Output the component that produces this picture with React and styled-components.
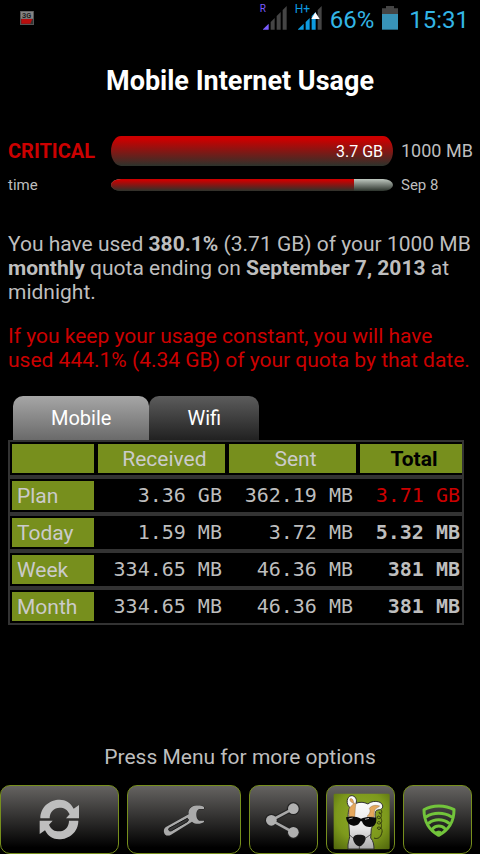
import React from "react";
import styled, { createGlobalStyle } from "styled-components";

const GlobalStyle = createGlobalStyle`
	* {
		box-sizing: border-box;
	}
	body {
		margin: 0;
		background: #000;
		color: #bebebe;
		font-family: Roboto, "Noto Sans", sans-serif;
	}
`;

const Screen = styled.div`
	min-height: 100vh;
	display: flex;
	flex-direction: column;
`;

const StatusBar = styled.header`
	height: 36px;
	padding: 0 11px 0 20px;
	display: flex;
	align-items: center;
	justify-content: space-between;
	color: #33b5e5;
	font-size: 24px;
	line-height: 24px;
`;

const StatusIcons = styled.div`
	display: flex;
	align-items: center;
	gap: 8px;
`;

const Percent = styled.span`
	padding-top: 4px;
`;

const Clock = styled.time`
	padding: 4px 0 0 3px;
`;

const SignalWrap = styled.span`
	position: relative;
	display: flex;
	padding-left: ${(props) => props.$indent}px;
`;

const SignalType = styled.span`
	position: absolute;
	left: 0;
	top: -2px;
	color: ${(props) => props.$color};
	font-size: ${(props) => props.$size}px;
	line-height: 10px;
`;

const Title = styled.h1`
	margin: 0;
	padding: 29px 8px 0;
	color: #fff;
	font-size: 27px;
	font-weight: 700;
	line-height: 32px;
	text-align: center;
`;

const Content = styled.main`
	padding: 39px 0 0 8px;
`;

const Meters = styled.div`
	display: grid;
	grid-template-columns: 95px 1fr 71px;
	column-gap: 8px;
	row-gap: 8px;
	align-items: center;
	padding-right: 8px;
`;

const MeterLabel = styled.span`
	color: ${(props) => (props.$critical ? "#cc0000" : "inherit")};
	font-size: ${(props) => (props.$critical ? 20 : 15)}px;
	font-weight: ${(props) => (props.$critical ? 700 : 400)};
	line-height: 22px;
	white-space: nowrap;
`;

const MeterLimit = styled.span`
	font-size: ${(props) => (props.$small ? 15 : 18)}px;
	line-height: 22px;
	white-space: nowrap;
`;

const Track = styled.div`
	height: ${(props) => (props.$thin ? 12 : 30)}px;
	border-radius: ${(props) => (props.$thin ? "10px / 6px" : "10px / 15px")};
	background: linear-gradient(#bfc8c0, #2c332c);
	overflow: hidden;
`;

const Fill = styled.div`
	height: 100%;
	padding-right: 10px;
	background: linear-gradient(#cc0000, #cc0000 10%, #2c332c);
	color: #fff;
	font-size: 16px;
	line-height: 32px;
	text-align: right;
`;

const Message = styled.p`
	margin: ${(props) => (props.$warning ? 20 : 36)}px 0 0;
	color: ${(props) => (props.$warning ? "#cc0000" : "inherit")};
	font-size: 21px;
	line-height: 24px;
`;

const Tabs = styled.div`
	display: flex;
	margin-top: 24px;
	padding-left: 5px;
`;

const Tab = styled.button`
	height: 44px;
	padding: 0 38px;
	border: 0;
	border-radius: 10px 10px 0 0;
	background: ${(props) =>
		props.$active
			? "linear-gradient(#a6a6a6, #6a6a6a)"
			: "linear-gradient(#5c5c5c, #212121)"};
	color: #fff;
	font-family: inherit;
	font-size: 20px;
	line-height: 44px;
`;

const TableWrap = styled.div`
	padding-right: 16px;
`;

const UsageTable = styled.table`
	width: 100%;
	table-layout: fixed;
	border: 2px solid #333;
	border-collapse: separate;
	border-spacing: 0;
	font-size: 21px;
	line-height: 30px;

	tr:not(:last-child) > *,
	thead th {
		border-bottom: 4px solid #333;
	}
	tbody tr:last-child > * {
		border-bottom: 0;
	}
`;

const Column = styled.col`
	width: ${(props) => props.$width}%;
`;

const HeadCell = styled.th`
	padding: 2px;
	font-weight: ${(props) => (props.$strong ? 700 : 400)};
	color: ${(props) => (props.$strong ? "#000" : "#cbcbcb")};

	&:last-child {
		padding-right: 0;
	}
`;

const Plate = styled.div`
	height: 29px;
	padding: ${(props) => (props.$left ? "0 5px" : "0 2px 0 8px")};
	background: #778f1d;
	text-align: ${(props) => (props.$left ? "left" : "center")};
`;

const DataCell = styled.td`
	padding: 2px ${(props) => (props.$total ? 2 : 5)}px 2px 0;
	color: ${(props) => (props.$over ? "#cc0000" : "inherit")};
	font-family: "DejaVu Sans Mono", monospace;
	font-size: 20px;
	font-weight: ${(props) => (props.$total && !props.$over ? 700 : 400)};
	line-height: 29px;
	text-align: right;
	white-space: nowrap;
`;

const Footer = styled.footer`
	margin-top: auto;
`;

const Hint = styled.p`
	margin: 0;
	padding: 24px 0 16px;
	font-size: 21px;
	line-height: 24px;
	text-align: center;
`;

const Toolbar = styled.div`
	display: flex;
	gap: 8px;
	padding-right: 8px;
`;

const ToolButton = styled.button`
	flex: ${(props) => (props.$grow ? `${props.$grow} 1 0` : "0 0 69px")};
	height: 69px;
	padding: 0;
	display: flex;
	align-items: center;
	justify-content: center;
	border: 1px solid #778f1d;
	border-radius: 10px;
	background: linear-gradient(#656361, #000 92%);
`;

const rows = [
	{ label: "Plan", received: "3.36 GB", sent: "362.19 MB", total: "3.71 GB", over: true },
	{ label: "Today", received: "1.59 MB", sent: "3.72 MB", total: "5.32 MB" },
	{ label: "Week", received: "334.65 MB", sent: "46.36 MB", total: "381 MB" },
	{ label: "Month", received: "334.65 MB", sent: "46.36 MB", total: "381 MB" },
];

const NotificationIcon = () => (
	<svg width="14" height="14" viewBox="0 0 42 42" aria-label="3G usage">
		<rect width="42" height="42" fill="#555" />
		<rect x="3" y="2" width="36" height="21" fill="#858585" />
		<text x="6" y="20" fontSize="22" fontWeight="700" fill="#222">
			3G
		</text>
		<rect x="3" y="24" width="36" height="15" fill="#333" />
		<path d="M4 24h33l-6 14H4z" fill="#b80d0d" />
	</svg>
);

const Signal = ({ label, color, level, indent, size, uploading }) => (
	<SignalWrap $indent={indent}>
		<SignalType $color={color} $size={size}>
			{label}
		</SignalType>
		<svg width="24" height="24" viewBox="0 0 72 72">
			<path d="M0 71V70L17 53V71z" fill={color} />
			<path d="M23 71V48L35 36V71z" fill={level > 1 ? color : "#454545"} />
			<path d="M41 71V30L53 18V71z" fill={level > 2 ? color : "#454545"} />
			<path d="M59 71V12L71 0V71z" fill="#454545" />
			{uploading && <path d="M52 19L65 39H40z" fill="#fff" />}
		</svg>
	</SignalWrap>
);

const BatteryIcon = () => (
	<svg width="16" height="24" viewBox="0 0 48 72">
		<path d="M12 0h24v7h12v18H0V7h12z" fill="#454545" />
		<rect y="24" width="48" height="47" fill="#3893b8" />
	</svg>
);

const RefreshIcon = () => (
	<svg width="48" height="48" viewBox="106 64 144 144" fill="#bebebe">
		<path d="M122 131C122 97 150 75 180 75C198 75 213 84 222 102L238 91V131H199L210 119C203 104 193 99 180 99C163 99 150 112 150 131Z" />
		<path
			transform="rotate(180 179 134.5)"
			d="M122 131C122 97 150 75 180 75C198 75 213 84 222 102L238 91V131H199L210 119C203 104 193 99 180 99C163 99 150 112 150 131Z"
		/>
	</svg>
);

const WrenchIcon = () => (
	<svg width="48" height="48" viewBox="0 64 144 144">
		<path
			d="M132 97C122 91 104 92 95 97C87 102 84 110 86 119L18 157C9 163 11 175 16 180C20 184 28 183 33 180L96 141C106 150 122 149 132 142V138H117C110 133 109 126 109 119C109 112 111 106 117 103H132Z"
			fill="#aaa"
			stroke="#222"
			strokeWidth="3"
			paintOrder="stroke"
		/>
		<path
			d="M82 131C86 133 86 138 82 141L35 168C29 171 23 166 27 161Z"
			fill="#363636"
			stroke="#161616"
			strokeWidth="3"
		/>
	</svg>
);

const ShareIcon = () => (
	<svg width="48" height="48" viewBox="298 64 144 144">
		<g fill="#222" stroke="#222">
			<path d="M398 102L332 137L398 173" fill="none" strokeWidth="14" />
			<circle cx="332" cy="137" r="19" />
			<circle cx="398" cy="102" r="19" />
			<circle cx="398" cy="173" r="19" />
		</g>
		<g fill="#b0b0b0">
			<path d="M398 102L332 137L398 173" fill="none" stroke="#a8a8a8" strokeWidth="8" />
			<circle cx="332" cy="137" r="16" />
			<circle cx="398" cy="102" r="16" />
			<circle cx="398" cy="173" r="16" />
		</g>
	</svg>
);

const DogIcon = () => (
	<svg width="60" height="60" viewBox="31 46 180 180">
		<defs>
			<radialGradient id="lawn" cx="0.5" cy="0.4" r="0.75">
				<stop offset="0" stopColor="#8fab28" />
				<stop offset="0.6" stopColor="#7d991c" />
				<stop offset="1" stopColor="#53690d" />
			</radialGradient>
			<linearGradient id="fur" x1="0" y1="0" x2="0" y2="1">
				<stop offset="0" stopColor="#fff" />
				<stop offset="0.6" stopColor="#e6e6e6" />
				<stop offset="1" stopColor="#aaa" />
			</linearGradient>
		</defs>
		<rect x="39" y="57" width="168" height="167" rx="4" fill="url(#lawn)" />
		<path
			d="M82 223C80 205 86 196 87 186L84 140C80 120 84 106 87 98C75 88 78 66 91 63C105 62 110 76 106 86C118 81 130 82 142 88C150 80 166 78 178 83C188 89 189 100 180 104C174 107 168 104 165 110C162 118 164 125 164 132C162 147 156 152 152 162L150 190C158 198 160 211 160 223Z"
			fill="url(#fur)"
			stroke="#333"
			strokeWidth="3"
		/>
		<path
			d="M88 98L99 87C91 82 86 79 88 73C93 69 99 76 99 85L106 87C103 99 104 112 102 127H86C84 115 85 105 88 98Z"
			fill="#e5a85d"
			stroke="#715027"
			strokeWidth="1"
		/>
		<path
			d="M146 101C152 92 165 90 177 94C173 99 168 98 163 105C158 115 163 124 159 128L139 125C146 119 151 111 146 101Z"
			fill="#e5a85d"
			stroke="#715027"
			strokeWidth="1"
		/>
		<path
			d="M76 128C90 123 109 125 121 132C134 126 151 126 167 129C168 145 163 156 148 157C134 158 127 150 124 140H119C116 149 109 154 98 153C84 152 78 142 76 128Z"
			fill="#080808"
		/>
		<path d="M84 133L96 130M133 134L145 131" stroke="#aaa" strokeWidth="3" />
		<path
			d="M97 191C99 181 108 180 117 180C128 180 136 184 135 192C134 202 124 215 116 215C107 214 98 203 97 191Z"
			fill="#151515"
		/>
		<path
			d="M87 181L98 191M135 190L151 179M116 214V223"
			fill="none"
			stroke="#222"
			strokeWidth="2"
		/>
		<path
			d="M181 106C186 113 182 119 176 116C171 112 182 111 182 123C182 135 167 134 170 126C173 120 184 130 183 141C181 152 165 148 171 142C177 137 186 148 181 160C177 168 167 163 171 158C179 154 188 165 183 176C180 190 169 194 160 190"
			fill="none"
			stroke="#30370d"
			strokeWidth="3"
		/>
	</svg>
);

const ShieldIcon = () => (
	<svg
		width="48"
		height="48"
		viewBox="280 64 144 144"
		fill="none"
		stroke="#72c43b"
		strokeWidth="9"
		strokeLinecap="round"
		strokeLinejoin="round"
	>
		<path d="M310 105C335 90 374 90 400 105C400 143 385 165 354 182C324 165 310 143 310 105Z" />
		<path d="M317 126C338 112 370 112 392 126" />
		<path d="M325 145C340 132 368 132 384 145" />
		<path d="M336 162C346 151 363 151 373 162" />
		<path d="M345 173C350 168 358 168 363 173L354 180Z" fill="#72c43b" strokeWidth="3" />
	</svg>
);

const App = () => {
	const [tab, setTab] = React.useState("Mobile");

	return (
		<Screen>
			<GlobalStyle />
			<StatusBar>
				<NotificationIcon />
				<StatusIcons>
					<Signal label="R" color="#7a5cff" level={1} indent={3} size={10} />
					<Signal label="H+" color="#0d9be0" level={3} indent={3} size={12} uploading />
					<Percent>66%</Percent>
					<BatteryIcon />
					<Clock>15:31</Clock>
				</StatusIcons>
			</StatusBar>
			<Title>Mobile Internet Usage</Title>
			<Content>
				<Meters>
					<MeterLabel $critical>CRITICAL</MeterLabel>
					<Track>
						<Fill style={{ width: "100%" }}>3.7 GB</Fill>
					</Track>
					<MeterLimit>1000 MB</MeterLimit>
					<MeterLabel>time</MeterLabel>
					<Track $thin>
						<Fill style={{ width: "86%" }} />
					</Track>
					<MeterLimit $small>Sep 8</MeterLimit>
				</Meters>
				<Message>
					You have used <b>380.1%</b> (3.71 GB) of your 1000 MB <b>monthly</b> quota
					ending on <b>September 7, 2013</b> at midnight.
				</Message>
				<Message $warning>
					If you keep your usage constant, you will have used 444.1% (4.34 GB) of
					your quota by that date.
				</Message>
				<Tabs role="tablist">
					{["Mobile", "Wifi"].map((name) => (
						<Tab
							key={name}
							role="tab"
							aria-selected={tab === name}
							$active={tab === name}
							onClick={() => setTab(name)}
						>
							{name}
						</Tab>
					))}
				</Tabs>
				<TableWrap>
					<UsageTable>
						<colgroup>
							<Column $width={19} />
							<Column $width={29} />
							<Column $width={29} />
							<Column $width={23} />
						</colgroup>
						<thead>
							<tr>
								<HeadCell>
									<Plate />
								</HeadCell>
								<HeadCell scope="col">
									<Plate>Received</Plate>
								</HeadCell>
								<HeadCell scope="col">
									<Plate>Sent</Plate>
								</HeadCell>
								<HeadCell scope="col" $strong>
									<Plate>Total</Plate>
								</HeadCell>
							</tr>
						</thead>
						<tbody>
							{rows.map((row) => (
								<tr key={row.label}>
									<HeadCell scope="row">
										<Plate $left>{row.label}</Plate>
									</HeadCell>
									<DataCell>{row.received}</DataCell>
									<DataCell>{row.sent}</DataCell>
									<DataCell $total $over={row.over}>
										{row.total}
									</DataCell>
								</tr>
							))}
						</tbody>
					</UsageTable>
				</TableWrap>
			</Content>
			<Footer>
				<Hint>Press Menu for more options</Hint>
				<Toolbar>
					<ToolButton $grow={119} aria-label="Refresh">
						<RefreshIcon />
					</ToolButton>
					<ToolButton $grow={114} aria-label="Settings">
						<WrenchIcon />
					</ToolButton>
					<ToolButton aria-label="Share">
						<ShareIcon />
					</ToolButton>
					<ToolButton aria-label="Watchdog">
						<DogIcon />
					</ToolButton>
					<ToolButton aria-label="Wifi shield">
						<ShieldIcon />
					</ToolButton>
				</Toolbar>
			</Footer>
		</Screen>
	);
};

export default App;
